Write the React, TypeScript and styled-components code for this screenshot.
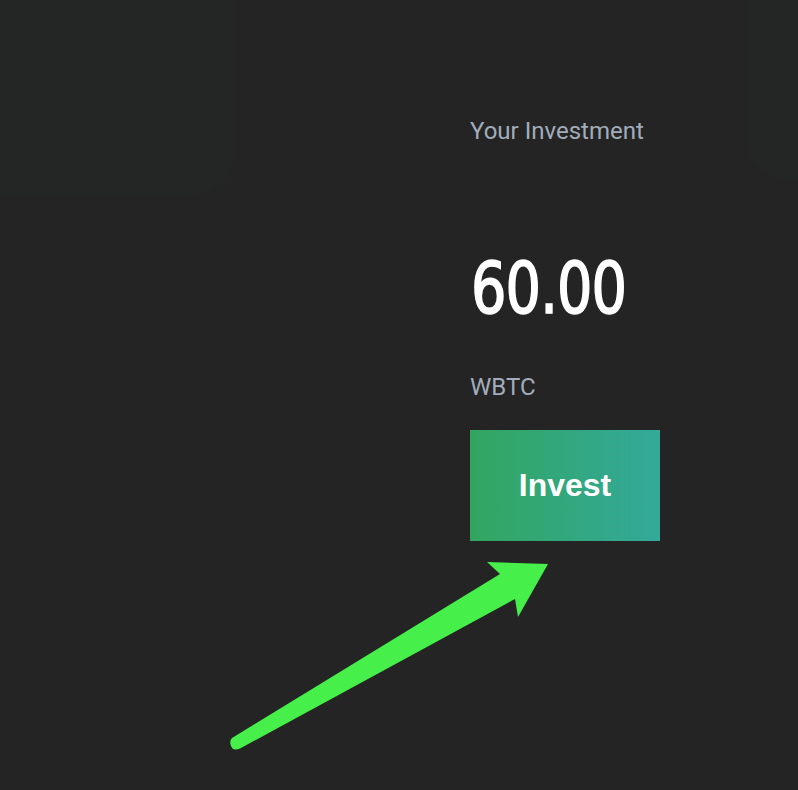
import styled, { createGlobalStyle } from 'styled-components'

const GlobalStyle = createGlobalStyle`
  html, body {
    margin: 0;
    padding: 0;
    background: #242424;
  }
  body {
    font-family: Roboto, "Liberation Sans", sans-serif;
  }
`

export default function App(): JSX.Element {
  return (
    <>
      <GlobalStyle />
      <Page>
        <SideCard $width={235} $height={195} $corner="0 0 40px 0" />
        <Content>
          <Label>Your Investment</Label>
          <Amount>60.00</Amount>
          <Unit>WBTC</Unit>
          <InvestButton>Invest</InvestButton>
        </Content>
        <SideCard $width={52} $height={180} $corner="0 0 0 40px" />
        <Pointer width="798" height="790" viewBox="0 0 798 790">
          <path
            d="M232 738 L500 574 L487 562 L548 564 L518 617 L515 599 L241 748 Q233 752 231 746 Q229 741 232 738 Z"
            fill="#46ef4a"
          />
        </Pointer>
      </Page>
    </>
  )
}

const Page = styled.div`
  position: relative;
  display: flex;
  align-items: flex-start;
  width: 798px;
  height: 790px;
  overflow: hidden;
  background: #242424;
`

const SideCard = styled.div<{ $width: number; $height: number; $corner: string }>`
  flex: 0 0 ${(p) => p.$width}px;
  height: ${(p) => p.$height}px;
  background: #242525;
  border-radius: ${(p) => p.$corner};
`

const Content = styled.div`
  flex: 1;
  display: flex;
  flex-direction: column;
  align-items: flex-start;
  padding: 116px 0 0 235px;
`

const Label = styled.div`
  font-size: 24px;
  line-height: 30px;
  color: #a3acbb;
`

const Amount = styled.div`
  margin-top: 104px;
  margin-left: 1px;
  font-family: "DejaVu Sans Condensed", "DejaVu Sans", sans-serif;
  font-size: 72px;
  font-weight: 400;
  line-height: 76px;
  color: #ffffff;
  letter-spacing: -1px;
  -webkit-text-stroke: 1.6px #ffffff;
  transform: scaleX(0.86);
  transform-origin: left center;
`

const Unit = styled.div`
  margin-top: 46px;
  font-size: 24px;
  line-height: 30px;
  color: #a3acbb;
`

const InvestButton = styled.button`
  margin-top: 28px;
  width: 190px;
  height: 111px;
  border: none;
  background: linear-gradient(90deg, #32a65f 0%, #33a99b 100%);
  color: #ffffff;
  font-family: "Liberation Sans", Arial, sans-serif;
  font-weight: 700;
  font-size: 32px;
  cursor: pointer;
`

const Pointer = styled.svg`
  position: absolute;
  left: 0;
  top: 0;
  pointer-events: none;
`
